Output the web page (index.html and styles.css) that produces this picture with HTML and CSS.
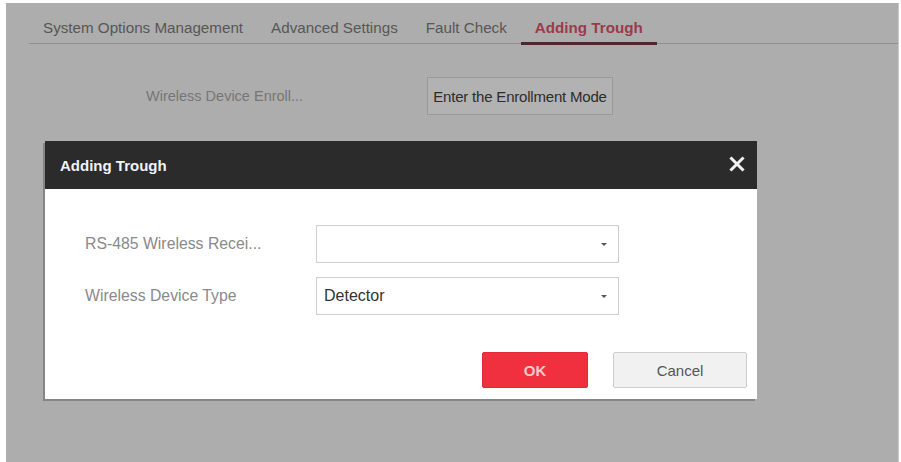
FILE: index.html
```html
<!DOCTYPE html>
<html lang="en">

<head>
    <meta charset="UTF-8">
    <meta name="viewport" content="width=device-width, initial-scale=1.0">
    <title>Adding Trough</title>
    <link rel="stylesheet" href="styles.css">
</head>

<body>
    <div id="screen">
        <div class="tabs">
            <div class="tab">System Options Management</div>
            <div class="tab">Advanced Settings</div>
            <div class="tab">Fault Check</div>
            <div class="tab active">Adding Trough</div>
        </div>

        <div class="enroll-row">
            <span class="enroll-label">Wireless Device Enroll...</span>
            <button class="enroll-btn">Enter the Enrollment Mode</button>
        </div>

        <!-- 팝업 -->
        <div class="dialog">
            <div class="dialog-head">
                <span class="dialog-title">Adding Trough</span>
                <svg class="close" width="16" height="16" viewBox="0 0 16 16">
                    <path d="M2.5 2.5 L13.5 13.5 M13.5 2.5 L2.5 13.5" stroke="#f2f2f2" stroke-width="3" stroke-linecap="square" />
                </svg>
            </div>
            <div class="dialog-body">
                <div class="form-row">
                    <span class="form-label">RS-485 Wireless Recei...</span>
                    <div class="select"><span></span><i class="arrow"></i></div>
                </div>
                <div class="form-row">
                    <span class="form-label">Wireless Device Type</span>
                    <div class="select"><span>Detector</span><i class="arrow"></i></div>
                </div>
            </div>
            <div class="dialog-foot">
                <button class="btn btn-ok">OK</button>
                <button class="btn btn-cancel">Cancel</button>
            </div>
        </div>
    </div>
</body>

</html>
```

FILE: styles.css
```css
body {
    margin: 0;
    background: white;
    font-family: "Liberation Sans", Arial, sans-serif;
}

#screen {
    width: 892px;
    height: 459px;
    margin: 3px 0 0 6px;
    background: #adadad;
    border-right: 1px solid #c8c8c8;
    position: relative;
}

.tabs {
    display: flex;
    margin-left: 23px;
    height: 40px;
    border-bottom: 1px solid #909090;
}

.tab {
    padding: 16px 14px 0 14px;
    font-size: 15.2px;
    line-height: 18px;
    color: #575757;
}

.tab.active {
    color: #9c3a4b;
    font-weight: bold;
    border-bottom: 3px solid #4a2a2f;
    margin-bottom: -2px;
}

.enroll-row {
    display: flex;
    align-items: center;
    margin: 33px 0 0 140px;
}

.enroll-label {
    width: 281px;
    font-size: 14.5px;
    color: #767676;
}

.enroll-btn {
    width: 186px;
    height: 38px;
    padding: 0;
    background: #b2b2b2;
    border: 1px solid #999;
    font-family: inherit;
    font-size: 15px;
    letter-spacing: -0.2px;
    color: #2c2c2c;
}

.dialog {
    position: absolute;
    left: 39px;
    top: 138px;
    width: 712px;
    height: 258px;
    background: white;
    box-shadow: -2px 2px 0 #858585;
    display: flex;
    flex-direction: column;
}

.dialog-head {
    height: 48px;
    background: #2b2b2b;
    display: flex;
    align-items: center;
    justify-content: space-between;
    padding: 0 12px 0 15px;
}

.dialog-title {
    color: #eef2fa;
    font-size: 15px;
    font-weight: bold;
}

.close {
    margin-top: -2px;
}

.dialog-body {
    padding: 36px 0 0 40px;
    display: flex;
    flex-direction: column;
    gap: 14px;
}

.form-row {
    display: flex;
    align-items: center;
}

.form-label {
    width: 231px;
    font-size: 15.8px;
    color: #8a8a8a;
}

.select {
    width: 283px;
    height: 36px;
    border: 1px solid #cfcfcf;
    display: flex;
    align-items: center;
    justify-content: space-between;
    padding: 0 11px 0 7px;
    font-size: 16px;
    color: #333;
}

.arrow {
    width: 0;
    height: 0;
    border-left: 3px solid transparent;
    border-right: 3px solid transparent;
    border-top: 3px solid #555;
}

.dialog-foot {
    margin-top: auto;
    display: flex;
    justify-content: flex-end;
    gap: 25px;
    padding: 0 10px 11px 0;
}

.btn {
    height: 36px;
    font-family: inherit;
    font-size: 15px;
    border-radius: 2px;
}

.btn-ok {
    width: 106px;
    background: #f0303f;
    border: 1px solid #e42a38;
    color: #f9c9cd;
    font-weight: bold;
}

.btn-cancel {
    width: 134px;
    background: #f1f1f1;
    border: 1px solid #cdcdcd;
    color: #555;
}
```
